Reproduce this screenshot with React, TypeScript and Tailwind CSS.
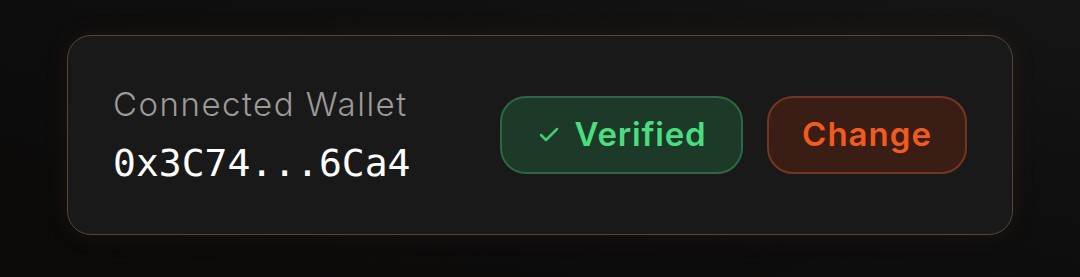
import { Check } from "lucide-react";

export default function App() {
  return (
    <div className="w-[1080px] h-[277px] flex justify-center pt-[35px] bg-gradient-to-tr from-[#0b0a09] via-[#0e0d0d] to-[#161515] font-['Inter',sans-serif]">
      <div className="w-[946px] h-[200px] flex items-center justify-between rounded-[24px] border border-[#5a4432] bg-[#1a1919] px-[45px] shadow-[0_0_24px_rgba(120,70,30,0.12)]">
        <div className="flex flex-col">
          <span className="text-[33px] leading-none text-[#9b9a99] tracking-[1.5px] font-light">Connected Wallet</span>
          <span className="mt-[23px] text-[38px] leading-none text-white font-['DejaVu_Sans_Mono',monospace]">0x3C74...6Ca4</span>
        </div>
        <div className="flex items-center gap-[24px]">
          <button className="h-[78px] w-[243px] flex items-center justify-center gap-[14px] rounded-[26px] border-2 border-[#2c6840] bg-[#1c3a27] text-[#4ade80]">
            <Check size={24} strokeWidth={2.5} className="text-[#3fcf70]" />
            <span className="text-[33px] font-semibold tracking-[0.8px]">Verified</span>
          </button>
          <button className="h-[78px] w-[200px] flex items-center justify-center rounded-[26px] border-2 border-[#733620] bg-[#3a1e15] text-[#f25a1e]">
            <span className="text-[33px] font-semibold tracking-[1px]">Change</span>
          </button>
        </div>
      </div>
    </div>
  );
}
